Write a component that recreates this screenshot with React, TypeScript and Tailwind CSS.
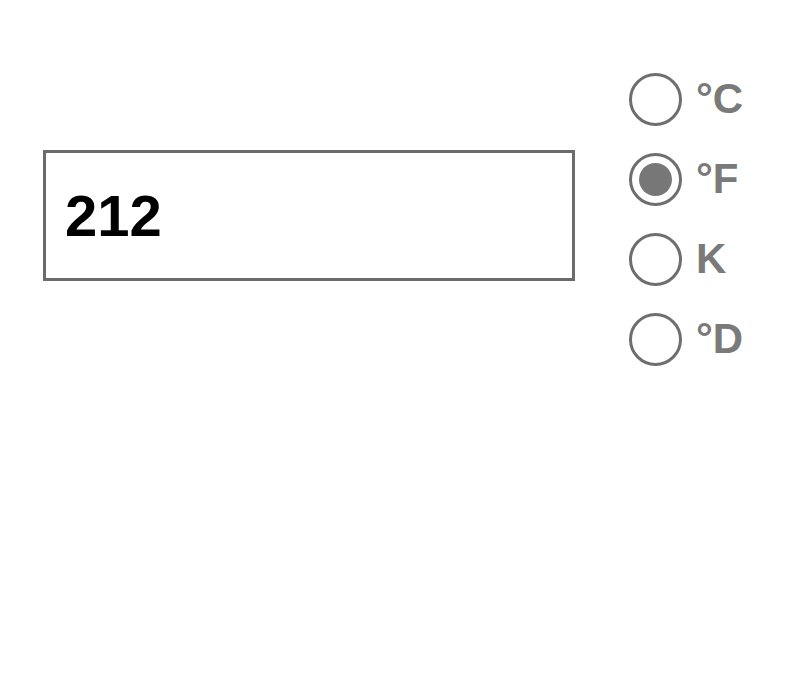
import { useState } from "react";

const units = ["°C", "°F", "K", "°D"];

export default function App() {
  const [value, setValue] = useState("212");
  const [unit, setUnit] = useState("°F");

  return (
    <div className="w-[790px] h-[675px] bg-white flex items-start pl-[43px] pt-[59px] font-['Liberation_Sans',Arial,sans-serif]">
      <input
        value={value}
        onChange={(e) => setValue(e.target.value)}
        className="mt-[91px] w-[532px] h-[131px] border-[3px] border-[#6b6b6b] pl-[19px] text-[58px] font-bold text-black outline-none"
      />
      <div className="ml-[54px] flex flex-col">
        {units.map((u) => (
          <label
            key={u}
            onClick={() => setUnit(u)}
            className="h-[80px] flex items-center gap-[14px] cursor-pointer"
          >
            <span className="w-[53px] h-[53px] rounded-full border-[3px] border-[#6e6e6e] flex items-center justify-center">
              {unit === u && (
                <span className="w-[33px] h-[33px] rounded-full bg-[#777777]" />
              )}
            </span>
            <span className="text-[42px] font-bold text-[#7a7a7a] leading-none">
              {u}
            </span>
          </label>
        ))}
      </div>
    </div>
  );
}
